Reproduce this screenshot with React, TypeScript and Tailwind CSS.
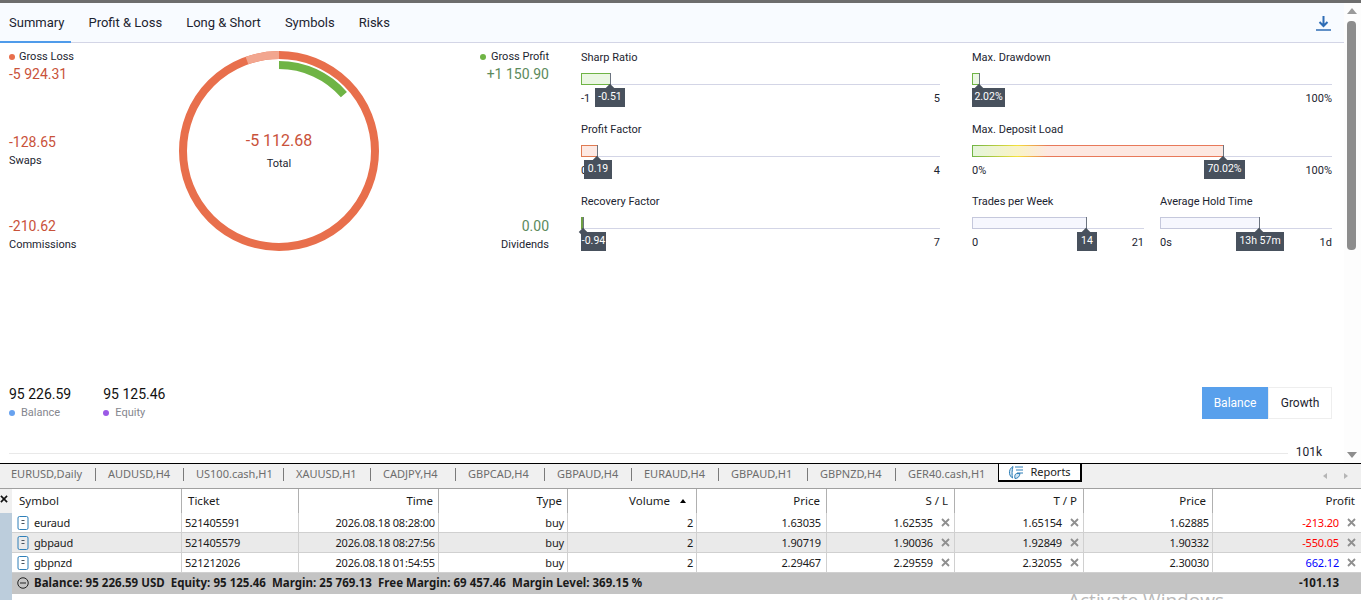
const roboto = "font-['Roboto',sans-serif]";

const topTabs = ["Summary", "Profit & Loss", "Long & Short", "Symbols", "Risks"];

const chartTabs = [
  { name: "EURUSD,Daily", w: 97 },
  { name: "AUDUSD,H4", w: 88 },
  { name: "US100.cash,H1", w: 100 },
  { name: "XAUUSD,H1", w: 87 },
  { name: "CADJPY,H4", w: 85 },
  { name: "GBPCAD,H4", w: 89 },
  { name: "GBPAUD,H4", w: 87 },
  { name: "EURAUD,H4", w: 87 },
  { name: "GBPAUD,H1", w: 89 },
  { name: "GBPNZD,H4", w: 88 },
];

const rows = [
  { symbol: "euraud", ticket: "521405591", time: "2026.08.18 08:28:00", open: "1.63035", sl: "1.62535", tp: "1.65154", price: "1.62885", profit: "-213.20", color: "text-[#ff0000]" },
  { symbol: "gbpaud", ticket: "521405579", time: "2026.08.18 08:27:56", open: "1.90719", sl: "1.90036", tp: "1.92849", price: "1.90332", profit: "-550.05", color: "text-[#ff0000]" },
  { symbol: "gbpnzd", ticket: "521212026", time: "2026.08.18 01:54:55", open: "2.29467", sl: "2.29559", tp: "2.32055", price: "2.30030", profit: "662.12", color: "text-[#0000ff]" },
];

const gridCols = "grid grid-cols-[170px_117px_140px_129px_129px_130px_128px_129px_129px_1fr]";

function Dot({ className }: { className: string }) {
  return <span className={`inline-block w-[6px] h-[6px] rounded-full ${className}`} />;
}

function Gauge({
  label,
  barW,
  barClass,
  tip,
  tipLeft,
  tipW,
  min,
  max,
}: {
  label: string;
  barW: number;
  barClass: string;
  tip: string;
  tipLeft: number;
  tipW: number;
  min: string;
  max: string;
}) {
  return (
    <div className={`h-[72px] text-[11px] text-[#1c2430] ${roboto}`}>
      <div className="h-[23px] pt-[1px] leading-[13px]">{label}</div>
      <div className="relative h-[12px] border-b border-[#d3d5e6]">
        <div className={`absolute left-0 top-0 h-[12px] border ${barClass}`} style={{ width: barW }} />
        <div className="absolute top-0 h-[12px] w-[1px] bg-[#6c7480]" style={{ left: barW - 1 }} />
        <div
          className="absolute top-[15px] z-10 h-[19px] bg-[#48515d] text-center text-[10.500px] leading-[18px] text-white"
          style={{ left: tipLeft, width: tipW }}
        >
          {tip}
          <span
            className="absolute top-[-3px] h-[6px] w-[6px] rotate-45 bg-[#48515d]"
            style={{ left: barW - tipLeft - 4 }}
          />
        </div>
      </div>
      <div className="mt-[7px] flex h-[14px] items-center justify-between leading-[14px]">
        <span>{min}</span>
        <span>{max}</span>
      </div>
    </div>
  );
}

function Donut() {
  return (
    <div className="relative h-[200px] w-[200px] shrink-0 mt-[1px]">
      <svg width={200} height={200} viewBox="0 0 200 200" fill="none">
        <circle cx="100" cy="100" r="96" stroke="#e86f4c" strokeWidth="8" />
        <path d="M67.95 9.5 A96 96 0 0 1 100 4" stroke="#f2a68f" strokeWidth="8" />
        <path d="M100 14 A86 86 0 0 1 164.9 43.6" stroke="#6fb445" strokeWidth="8" />
      </svg>
      <div className="absolute left-0 right-0 top-[79px] text-center">
        <div className="text-[16px] leading-[22px] text-[#c9523a]">-5 112.68</div>
        <div className="mt-[5px] text-[11px] leading-[14px] text-[#1c2430]">Total</div>
      </div>
    </div>
  );
}

function DocIcon() {
  return (
    <svg width={12} height={14} viewBox="0 0 12 14" fill="none" className="shrink-0">
      <rect x="1" y="0.5" width="10" height="13" rx="1.5" stroke="#2e7fb8" />
      <path d="M4.5 4.5h3M4.5 7.5h3" stroke="#4a5560" />
    </svg>
  );
}

function CrossMark() {
  return (
    <svg width={9} height={9} viewBox="0 0 9 9" className="shrink-0">
      <path d="M1 1l7 7M8 1l-7 7" stroke="#8f8f8f" strokeWidth="1.8" />
    </svg>
  );
}

function ReportsIcon() {
  return (
    <svg width={16} height={15} viewBox="0 0 16 15" fill="none" className="shrink-0">
      <path d="M5 1.5C2.5 3 1 5.5 1.5 8.5c.3 2 1.5 3.500 3 4.500C3.800 10 4 5 5 1.500z" fill="#cfe3f2" stroke="#2e7fb8" />
      <path d="M7 13.500c2.500 0 4.500-1.500 5-5H8.500C7 9 6.300 11 7 13.500z" fill="#cfe3f2" stroke="#2e7fb8" />
      <path d="M7 2h8M8 5h7M9 8h6" stroke="#2e7fb8" />
    </svg>
  );
}

export default function App() {
  return (
    <div className="flex h-[600px] w-[1361px] flex-col overflow-hidden bg-white">
      {/* report panel */}
      <div className="flex h-[464px] shrink-0 border-t-[3px] border-t-[#6d6d6d] border-b border-b-black">
        <div className="flex min-w-0 flex-1 flex-col">
          <div className={`flex h-[40px] shrink-0 items-stretch justify-between border-b border-[#d3d5e6] bg-[#f8fbff] text-[13px] text-[#1c2430] ${roboto}`}>
            <div className="flex">
              {topTabs.map((t, i) => (
                <div
                  key={t}
                  className={
                    i === 0
                      ? "mb-[-1px] flex items-center border-b-2 border-[#4f9bea] pl-[9px] pr-[7px] pt-[1px]"
                      : i === 1
                        ? "flex items-center pl-[17px] pr-[12px]"
                        : "flex items-center px-[12px]"
                  }
                >
                  {t}
                </div>
              ))}
            </div>
            <div className="flex items-center pr-[12px]">
              <svg width={17} height={16} viewBox="0 0 17 16" fill="none">
                <path d="M8.500 1v9M4.500 7l4 4 4-4" stroke="#2f6db5" strokeWidth="2" />
                <path d="M1 15h15" stroke="#2f6db5" strokeWidth="1.500" />
              </svg>
            </div>
          </div>

          <div className="flex min-h-0 flex-1 flex-col">
            <div className="flex pt-[7px]">
              <div className={`flex w-[581px] shrink-0 items-start ${roboto}`}>
                <div className="w-[179px] shrink-0 pl-[9px]">
                  <div className="flex h-[14px] items-center gap-[4px] text-[11px] text-[#1c2430]">
                    <Dot className="bg-[#e86f4c]" />
                    Gross Loss
                  </div>
                  <div className="h-[21px] text-[14px] leading-[21px] text-[#c9523a]">-5 924.31</div>
                  <div className="mt-[47px] h-[21px] text-[14px] leading-[21px] text-[#c9523a]">-128.65</div>
                  <div className="mt-[1px] h-[14px] text-[11px] leading-[14px] text-[#1c2430]">Swaps</div>
                  <div className="mt-[48px] h-[21px] text-[14px] leading-[21px] text-[#c9523a]">-210.62</div>
                  <div className="mt-[1px] h-[14px] text-[11px] leading-[14px] text-[#1c2430]">Commissions</div>
                </div>
                <Donut />
                <div className="w-[170px] shrink-0 text-right">
                  <div className="flex h-[14px] items-center justify-end gap-[5px] text-[11px] text-[#1c2430]">
                    <Dot className="bg-[#6fb445]" />
                    Gross Profit
                  </div>
                  <div className="h-[21px] text-[14px] leading-[21px] text-[#5c8a5c]">+1 150.90</div>
                  <div className="mt-[131px] h-[21px] text-[14px] leading-[21px] text-[#5c8a5c]">0.00</div>
                  <div className="mt-[1px] h-[14px] text-[11px] leading-[14px] text-[#1c2430]">Dividends</div>
                </div>
              </div>

              <div className="w-[359px] shrink-0">
                <Gauge label="Sharp Ratio" barW={30} barClass="border-[#6fb445] bg-[#ebf7e3]" tip="-0.51" tipLeft={14} tipW={30} min="-1" max="5" />
                <Gauge label="Profit Factor" barW={17} barClass="border-[#e07b52] bg-[#fde9e3]" tip="0.19" tipLeft={3} tipW={28} min="0" max="4" />
                <Gauge label="Recovery Factor" barW={3} barClass="border-[#6fa044] bg-[#6fa044]" tip="-0.94" tipLeft={0} tipW={25} min="" max="7" />
              </div>

              <div className="ml-[32px] w-[360px] shrink-0">
                <Gauge label="Max. Drawdown" barW={8} barClass="border-[#6fb445] bg-[#ebf7e3]" tip="2.02%" tipLeft={0} tipW={33} min="" max="100%" />
                <Gauge
                  label="Max. Deposit Load"
                  barW={252}
                  barClass="border-transparent [background:linear-gradient(90deg,#e4f5d9,#f9f3c8_18%,#fde8e1_30%)_padding-box,linear-gradient(90deg,#6fb445,#f5e13c_18%,#e8795a_30%)_border-box]"
                  tip="70.02%"
                  tipLeft={232}
                  tipW={41}
                  min="0%"
                  max="100%"
                />
                <div className="flex gap-[16px]">
                  <div className="w-[172px]">
                    <Gauge label="Trades per Week" barW={115} barClass="border-[#c5c8dc] bg-[#f6f7fe]" tip="14" tipLeft={105} tipW={20} min="0" max="21" />
                  </div>
                  <div className="w-[172px]">
                    <Gauge label="Average Hold Time" barW={100} barClass="border-[#c5c8dc] bg-[#f6f7fe]" tip="13h 57m" tipLeft={76} tipW={48} min="0s" max="1d" />
                  </div>
                </div>
              </div>
            </div>

            <div className={`mt-auto flex items-start justify-between pl-[9px] pr-[12px] ${roboto}`}>
              <div className="flex gap-[32px]">
                <div>
                  <div className="text-[14px] leading-[14px] text-[#111]">95 226.59</div>
                  <div className="mt-[5px] flex items-center gap-[6px] text-[11px] leading-[14px] text-[#85868e]">
                    <Dot className="bg-[#68a2ef]" />
                    Balance
                  </div>
                </div>
                <div>
                  <div className="text-[14px] leading-[14px] text-[#111]">95 125.46</div>
                  <div className="mt-[5px] flex items-center gap-[6px] text-[11px] leading-[14px] text-[#85868e]">
                    <Dot className="bg-[#9b59e6]" />
                    Equity
                  </div>
                </div>
              </div>
              <div className="flex h-[32px] text-[12px]">
                <div className="flex w-[66px] items-center justify-center bg-[#58a0ec] text-white">Balance</div>
                <div className="flex w-[64px] items-center justify-center border border-[#eeeeee] text-[#1c2430]">Growth</div>
              </div>
            </div>

            <div className={`mt-[23px] flex h-[20px] shrink-0 items-start pl-[9px] pr-[22px] ${roboto}`}>
              <div className="mt-[10px] h-[1px] flex-1 bg-[#e9e9e9]" />
              <span className="ml-[8px] mt-[2px] text-[12px] leading-[14px] text-[#1c2430]">101k</span>
            </div>
          </div>
        </div>

        {/* scrollbar */}
        <div className="flex w-[17px] shrink-0 flex-col items-center bg-[#fdfdfd] pr-[2px]">
          <div className="mt-[5px] h-0 w-0 border-x-[5px] border-b-[6px] border-x-transparent border-b-[#9a9a9a]" />
          <div className="mt-[7px] h-[229px] w-[9px] rounded-[4px] bg-[#8d8d8d]" />
          <div className="mt-auto mb-[5px] h-0 w-0 border-x-[5px] border-t-[6px] border-x-transparent border-t-[#8d8d8d]" />
        </div>
      </div>

      {/* chart tabs */}
      <div className="flex h-[25px] shrink-0 border-b border-[#a0a0a0] bg-[#f0f0f0] font-['Noto_Sans',sans-serif] text-[11px] text-[#6d6d6d]">
        <div className="flex pl-[11px] pt-[1px]">
          {chartTabs.map((t) => (
            <div key={t.name} className="relative h-[20px] leading-[18px]" style={{ width: t.w }}>
              {t.name}
              <span className="absolute right-[12px] top-[3px] h-[13px] w-[1px] bg-[#7a7a7a]" />
            </div>
          ))}
          <div className="w-[90px] leading-[18px]">GER40.cash,H1</div>
        </div>
        <div className="flex h-[18px] w-[84px] items-center justify-center gap-[6px] border-l border-r-2 border-b-2 border-black bg-white text-[#1a1a1a]">
          <ReportsIcon />
          Reports
        </div>
        <div className="ml-auto flex items-center gap-[17px] pr-[13px] text-[#b5b5b5]">
          <span className="h-0 w-0 border-y-[3px] border-r-[4px] border-y-transparent border-r-[#b5b5b5]" />
          <span className="h-0 w-0 border-y-[3px] border-l-[4px] border-y-transparent border-l-[#b5b5b5]" />
        </div>
      </div>

      {/* positions table */}
      <div className="relative flex min-h-0 flex-1 font-['Noto_Sans',sans-serif] text-[11.500px] text-[#1a1a1a]">
        <div className="w-[12px] shrink-0 bg-[#bccddc]">
          <div className="flex h-[24px] items-start bg-[#f0f0f0] pt-[6px]">
            <svg width={8} height={8} viewBox="0 0 9 9">
              <path d="M1 1l7 7M8 1l-7 7" stroke="#111" strokeWidth="1.800" />
            </svg>
          </div>
        </div>
        <div className="min-w-0 flex-1">
          <div className={`${gridCols} h-[24px] leading-[24px]`}>
            <div className="border-r border-[#b0b0b0] pl-[7px]">Symbol</div>
            <div className="border-r border-[#b0b0b0] pl-[6px]">Ticket</div>
            <div className="border-r border-[#b0b0b0] pr-[5px] text-right">Time</div>
            <div className="border-r border-[#b0b0b0] pr-[5px] text-right">Type</div>
            <div className="flex items-center justify-end gap-[10px] border-r border-[#b0b0b0] pr-[10px]">
              Volume
              <span className="h-0 w-0 border-x-[3.500px] border-b-[4px] border-x-transparent border-b-black" />
            </div>
            <div className="border-r border-[#b0b0b0] pr-[6px] text-right">Price</div>
            <div className="border-r border-[#b0b0b0] pr-[6px] text-right">S / L</div>
            <div className="border-r border-[#b0b0b0] pr-[6px] text-right">T / P</div>
            <div className="border-r border-[#b0b0b0] pr-[6px] text-right">Price</div>
            <div className="pr-[6px] text-right">Profit</div>
          </div>
          {rows.map((r, i) => (
            <div
              key={r.ticket}
              className={`${gridCols} h-[20px] border-b border-[#d0d0d0] text-[11px] leading-[19px] tracking-[-0.17px] last:h-[19px] last:border-b-0 ${i === 1 ? "bg-[#eaeaea]" : "bg-white"}`}
            >
              <div className="flex items-center gap-[5px] border-r border-[#d0d0d0] pl-[5px]">
                <DocIcon />
                {r.symbol}
              </div>
              <div className="border-r border-[#d0d0d0] pl-[3px]">{r.ticket}</div>
              <div className="border-r border-[#d0d0d0] pr-[3px] text-right">{r.time}</div>
              <div className="border-r border-[#d0d0d0] pr-[3px] text-right">buy</div>
              <div className="border-r border-[#d0d0d0] pr-[3px] text-right">2</div>
              <div className="border-r border-[#d0d0d0] pr-[5px] text-right">{r.open}</div>
              <div className="flex items-center justify-end gap-[8px] border-r border-[#d0d0d0] pr-[4px]">
                {r.sl}
                <CrossMark />
              </div>
              <div className="flex items-center justify-end gap-[8px] border-r border-[#d0d0d0] pr-[4px]">
                {r.tp}
                <CrossMark />
              </div>
              <div className="border-r border-[#d0d0d0] pr-[3px] text-right">{r.price}</div>
              <div className="flex items-center justify-end gap-[8px] pr-[5px]">
                <span className={r.color}>{r.profit}</span>
                <CrossMark />
              </div>
            </div>
          ))}
          <div className="flex h-[21px] items-center bg-[#c4c4c4] pb-[1px] pl-[5px] pr-[22px] font-bold leading-[20px] tracking-[0.03px]">
            <svg width={12} height={12} viewBox="0 0 12 12" fill="none" className="mr-[5px] shrink-0">
              <circle cx="6" cy="6" r="5.250" stroke="#222" />
              <path d="M3 6h6" stroke="#222" />
            </svg>
            <span className="whitespace-pre">Balance: 95 226.59 USD  Equity: 95 125.46  Margin: 25 769.13  Free Margin: 69 457.46  Margin Level: 369.15 %</span>
            <span className="ml-auto">-101.13</span>
          </div>
        </div>
        {/* OS watermark */}
        <div className="pointer-events-none absolute left-[1068px] top-[99px] font-['Open_Sans',sans-serif] text-[19px] leading-[24px] whitespace-nowrap text-[#b9b9b9]">
          Activate Windows
        </div>
      </div>
    </div>
  );
}
